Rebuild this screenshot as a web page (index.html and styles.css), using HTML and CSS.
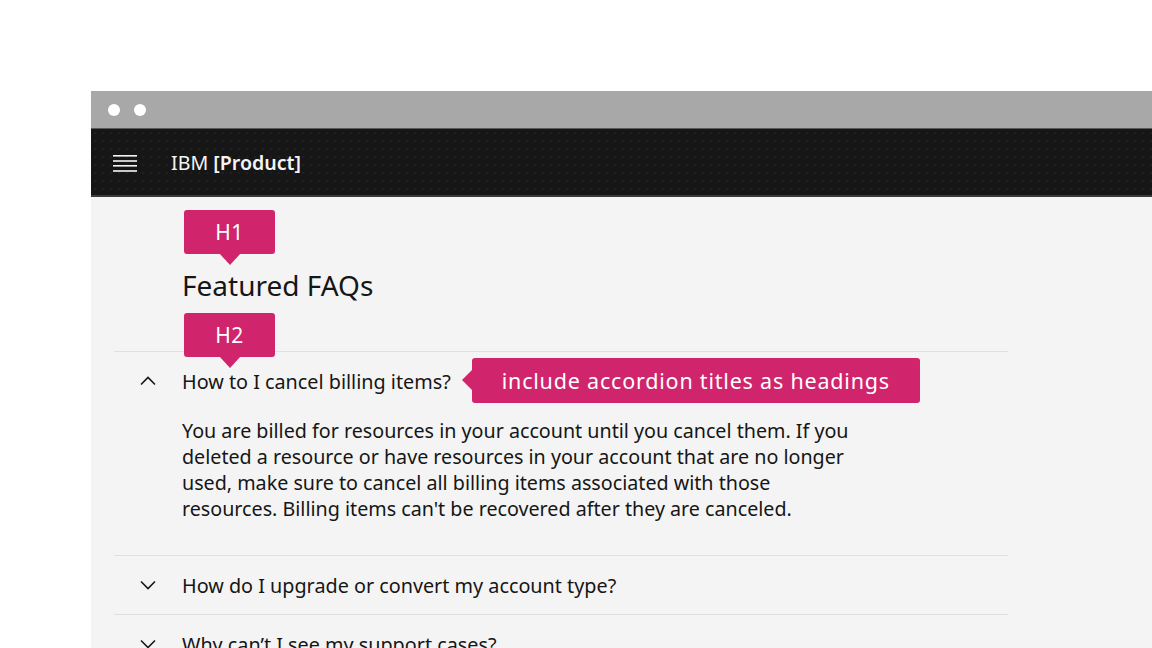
FILE: index.html
```html
<!DOCTYPE html>
<html lang="en">
<head>
<meta charset="utf-8">
<title>Featured FAQs</title>
<link rel="stylesheet" href="styles.css">
</head>
<body>
<div class="page">
  <div class="frame">
    <div class="chrome">
      <span class="dot"></span>
      <span class="dot"></span>
    </div>
    <header class="shell">
      <svg class="menu" width="24" height="18" viewBox="0 0 24 18" aria-hidden="true">
        <rect x="0" y="1" width="24" height="1.6" fill="#f4f4f4"/>
        <rect x="0" y="6.2" width="24" height="1.6" fill="#f4f4f4"/>
        <rect x="0" y="11" width="24" height="1.6" fill="#f4f4f4"/>
        <rect x="0" y="16.2" width="24" height="1.6" fill="#f4f4f4"/>
      </svg>
      <span class="brand">IBM <b>[Product]</b></span>
    </header>
    <main class="content">
      <h1 class="title">
        <span class="tag tag-down">H1</span>
        Featured FAQs
      </h1>
      <ul class="accordion">
        <li class="item open">
          <span class="tag tag-down tag-h2">H2</span>
          <div class="row">
            <svg class="chev" width="16" height="16" viewBox="0 0 16 16" aria-hidden="true"><path d="M1 11.5 L8 4.5 L15 11.5" fill="none" stroke="#161616" stroke-width="1.6"/></svg>
            <span class="q">How to I cancel billing items?</span>
            <span class="callout">include accordion titles as headings</span>
          </div>
          <p class="answer">You are billed for resources in your account until you cancel them. If you deleted a resource or have resources in your account that are no longer used, make sure to cancel all billing items associated with those resources. Billing items can't be recovered after they are canceled.</p>
        </li>
        <li class="item">
          <div class="row">
            <svg class="chev" width="16" height="16" viewBox="0 0 16 16" aria-hidden="true"><path d="M1 4.5 L8 11.5 L15 4.5" fill="none" stroke="#161616" stroke-width="1.6"/></svg>
            <span class="q">How do I upgrade or convert my account type?</span>
          </div>
        </li>
        <li class="item">
          <div class="row">
            <svg class="chev" width="16" height="16" viewBox="0 0 16 16" aria-hidden="true"><path d="M1 4.5 L8 11.5 L15 4.5" fill="none" stroke="#161616" stroke-width="1.6"/></svg>
            <span class="q">Why can’t I see my support cases?</span>
          </div>
        </li>
      </ul>
    </main>
  </div>
</div>
</body>
</html>
```
FILE: styles.css
```css
* { box-sizing: border-box; }
html, body { margin: 0; padding: 0; }
body {
  background: #ffffff;
  font-family: "Noto Sans", "Roboto", sans-serif;
  color: #161616;
  width: 1152px;
  height: 648px;
  overflow: hidden;
}
.page {
  padding: 91px 0 0 91px;
}
.frame {
  width: 1061px;
  height: 557px;
  overflow: hidden;
  background: #f4f4f4;
}
.chrome {
  height: 37px;
  background: #a8a8a8;
  display: flex;
  align-items: center;
  gap: 14px;
  padding-left: 17px;
}
.dot {
  width: 12px;
  height: 12px;
  border-radius: 50%;
  background: #ffffff;
}
.shell {
  height: 69px;
  background-color: #161616;
  background-image: radial-gradient(circle, #1f1f1f 0.7px, transparent 1px);
  background-size: 8px 8px;
  border-top: 1px solid #5a5a5a;
  border-bottom: 2px solid #3a3a3a;
  display: flex;
  align-items: center;
  padding-left: 22px;
}
.menu { display: block; margin-top: 1px; }
.brand {
  margin-left: 34px;
  font-size: 19.6px;
  color: #f4f4f4;
}
.brand b { font-weight: 600; }
.content {
  padding: 70px 0 0 23px;
}
.title {
  position: relative;
  margin: 0 0 48px 68px;
  font-size: 28px;
  line-height: 36px;
  font-weight: 400;
}
.tag {
  position: absolute;
  left: 2px;
  top: -57px;
  width: 91px;
  height: 44px;
  background: #d0256c;
  color: #ffffff;
  border-radius: 3px;
  font-size: 21px;
  font-weight: 400;
  line-height: 44px;
  text-align: center;
  letter-spacing: 0.5px;
}
.tag-down::after {
  content: "";
  position: absolute;
  left: 50%;
  bottom: -11px;
  margin-left: -11px;
  border-left: 11px solid transparent;
  border-right: 11px solid transparent;
  border-top: 12px solid #d0256c;
}
.tag-h2 {
  left: 70px;
  top: -39px;
  z-index: 2;
}
.accordion {
  list-style: none;
  margin: 0;
  padding: 0;
  width: 894px;
}
.item {
  position: relative;
  border-top: 1px solid #e0e0e0;
}
.row {
  height: 58px;
  display: flex;
  align-items: center;
  padding-left: 26px;
}
.chev { flex: none; display: block; }
.q {
  margin-left: 26px;
  font-size: 19.8px;
  white-space: nowrap;
}
.callout {
  position: relative;
  margin-left: 21px;
  height: 45px;
  width: 448px;
  flex: none;
  background: #d0256c;
  color: #ffffff;
  border-radius: 3px;
  font-size: 21.5px;
  line-height: 45px;
  text-align: center;
  letter-spacing: 0.8px;
  margin-top: -2px;
}
.callout::before {
  content: "";
  position: absolute;
  left: -10px;
  top: 50%;
  margin-top: -11px;
  border-top: 11px solid transparent;
  border-bottom: 11px solid transparent;
  border-right: 11px solid #d0256c;
}
.answer {
  margin: 8px 0 0 68px;
  padding-bottom: 33px;
  max-width: 675px;
  font-size: 19.7px;
  line-height: 26px;
}
```
